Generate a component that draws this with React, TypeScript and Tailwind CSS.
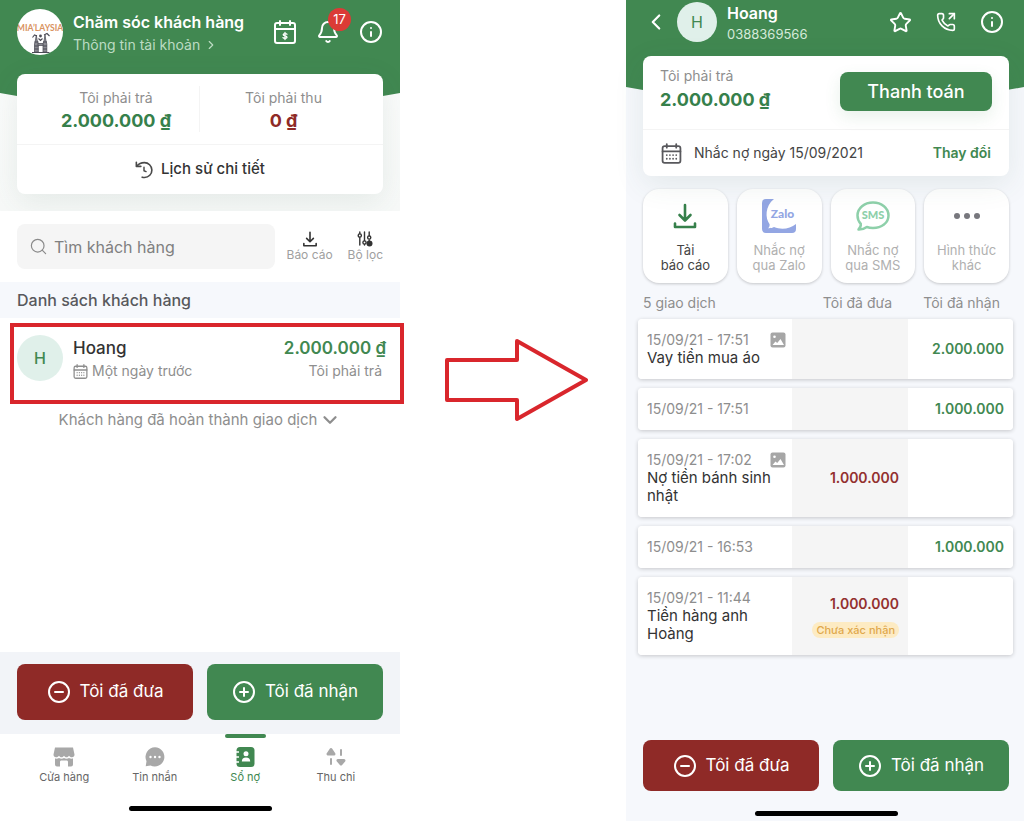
import type { ReactNode } from "react";
import {
  Bell,
  ChevronDown,
  ChevronLeft,
  ChevronRight,
  CircleMinus,
  CirclePlus,
  Info,
  PhoneOutgoing,
  Search,
  Star,
} from "lucide-react";

interface Transaction {
  time: string;
  note?: string;
  photo?: boolean;
  given?: string;
  received?: string;
  pending?: boolean;
}

const transactions: Transaction[] = [
  { time: "15/09/21 - 17:51", note: "Vay tiền mua áo", photo: true, received: "2.000.000" },
  { time: "15/09/21 - 17:51", received: "1.000.000" },
  { time: "15/09/21 - 17:02", note: "Nợ tiền bánh sinh nhật", photo: true, given: "1.000.000" },
  { time: "15/09/21 - 16:53", received: "1.000.000" },
  { time: "15/09/21 - 11:44", note: "Tiền hàng anh Hoàng", given: "1.000.000", pending: true },
];

function ShopLogo() {
  return (
    <svg viewBox="0 0 46 46" className="size-[46px] shrink-0 rounded-full bg-white">
      <text
        x="23"
        y="22"
        textAnchor="middle"
        fontFamily="Lato, sans-serif"
        fontSize="8.600"
        fontWeight="700"
        fill="#d9935f"
      >
        MIA’LAYSIA
      </text>
      {/* twin towers */}
      <g fill="#8b8b92" stroke="#55555e" strokeWidth="0.800">
        <path d="M17.500 43V35l1-4 .8-5 .8 5 1.200 4v8zM26 43V35l1.200-4 .8-5 .8 5 1 4v8z" />
        <path d="M21 34.500h5v2h-5z" />
      </g>
      <g fill="none" stroke="#4b4b55" strokeWidth="1.100">
        <path d="M15 43.500h17.500M17.500 33h4M17.500 37h4M17.500 40h4M26 33h4M26 37h4M26 40h4" />
        <path d="M15.500 28.500l2-2.500 2.500 1M27 26l3-1.500 2.500 2.500M21.500 29.500l2 2 2-2" />
      </g>
      <circle cx="23.500" cy="27" r="1.400" fill="#4b4b55" />
    </svg>
  );
}

function CalendarMoneyIcon() {
  return (
    <svg viewBox="0 0 24 26" className="h-[26px] w-6" fill="none" stroke="currentColor" strokeWidth="2" strokeLinecap="round">
      <rect x="2" y="4" width="20" height="20" rx="2" />
      <path d="M2 10h20M7 2v4M17 2v4" />
      <path d="M14 15.200c-.4-.8-3.800-1-3.800.6 0 1.500 3.800.8 3.800 2.400 0 1.500-3.400 1.400-4 .4M12 13.500v7" strokeWidth="1.300" />
    </svg>
  );
}

function CalendarIcon({ className }: { className: string }) {
  return (
    <svg viewBox="0 0 20 20" className={className} fill="none" stroke="currentColor" strokeLinecap="round">
      <rect x="1.500" y="3" width="17" height="16" rx="2" strokeWidth="1.700" />
      <path d="M1.500 8h17M5.500 1v3.500M14.500 1v3.500" strokeWidth="1.700" />
      <path d="M5.500 11.500h.01M8.500 11.500h.01M11.500 11.500h.01M14.500 11.500h.01M5.500 15h.01M8.500 15h.01M11.500 15h.01M14.500 15h.01" strokeWidth="1.700" />
    </svg>
  );
}

function HistoryIcon() {
  return (
    <svg viewBox="0 0 20 20" className="size-[18px] text-[#4a4a4a]" fill="none" stroke="currentColor" strokeWidth="1.800" strokeLinecap="round" strokeLinejoin="round">
      <path d="M1.500 1.500v4.500h5" />
      <path d="M2 5.700C4 3.200 7 1.800 10.300 1.800a8.300 8.300 0 0 1 .3 16.600c-1 0-1.700-.1-2.600-.4" />
      <path d="M10 7v3.800l2.300 1" strokeWidth="1.600" />
    </svg>
  );
}

function DownloadIcon({ className }: { className: string }) {
  return (
    <svg viewBox="0 0 24 26" className={className} fill="none" stroke="currentColor" strokeWidth="2.600" strokeLinecap="round" strokeLinejoin="round">
      <path d="M12 2v15M6.500 12l5.500 5.500 5.500-5.500M2 20.500V24h20v-3.500" />
    </svg>
  );
}

function FilterIcon() {
  return (
    <svg viewBox="0 0 16 16" className="size-4 text-[#333]" fill="none" stroke="currentColor" strokeWidth="1.400" strokeLinecap="round">
      <path d="M2.800 1v1.500M2.800 6.500V14M7.500 1v8.500M7.500 13.500v.5M12.200 1v4M12.200 9v1" />
      <circle cx="2.800" cy="4.500" r="1.600" />
      <circle cx="7.500" cy="11.500" r="1.600" />
      <circle cx="12.200" cy="6.500" r="1.600" />
      <circle cx="12.500" cy="12.500" r="3" fill="currentColor" stroke="none" />
    </svg>
  );
}

function ZaloIcon() {
  return (
    <svg viewBox="0 0 34 34" className="size-[34px]">
      <path
        d="M12 0H4a4 4 0 0 0-4 4v26a4 4 0 0 0 4 4h26a4 4 0 0 0 4-4v-5c-6 5-15 6-22 3-1.500.8-3.500 1.300-6 1.200 1.300-1 1.800-2.500 1.600-4C3 19 3 7 12 0z"
        fill="#93a6e3"
      />
      <text x="20.500" y="19" textAnchor="middle" fontFamily="Lato, sans-serif" fontSize="12" fontWeight="900" fill="#93a6e3">
        Zalo
      </text>
    </svg>
  );
}

function SmsIcon() {
  return (
    <svg viewBox="0 0 34 30" className="h-[30px] w-[34px]">
      <path
        d="M17 1.500c8.600 0 15.500 5.500 15.500 13S25.600 27 17 27c-2.300 0-4.300-.3-6.200-1-2.200 1.700-5 2.600-8.300 2.500 1.800-1.700 2.500-3.800 2.300-5.700A11.800 11.800 0 0 1 1.500 14.500c0-7.500 6.900-13 15.500-13z"
        fill="none"
        stroke="#8ed0aa"
        strokeWidth="2.500"
        strokeLinejoin="round"
      />
      <text x="17" y="18" textAnchor="middle" fontFamily="Lato, sans-serif" fontSize="11" fontWeight="900" fill="#8ed0aa">
        SMS
      </text>
    </svg>
  );
}

function DotsIcon() {
  return (
    <svg viewBox="0 0 28 8" className="h-2 w-7" fill="#77777d">
      <circle cx="4" cy="4" r="3" />
      <circle cx="14" cy="4" r="3" />
      <circle cx="24" cy="4" r="3" />
    </svg>
  );
}

function PhotoIcon() {
  return (
    <svg viewBox="0 0 16 16" className="size-4 shrink-0">
      <rect x="0.500" y="0.500" width="15" height="15" rx="2" fill="#a6a6a6" />
      <circle cx="4.500" cy="4.800" r="1.300" fill="#fff" />
      <path d="M2.500 13l3-3.500 1.700 1.500L10.500 7l3.500 6z" fill="#fff" />
    </svg>
  );
}

function StoreIcon() {
  return (
    <svg viewBox="0 0 22 20" className="h-5 w-[22px]" fill="currentColor">
      <path d="M2 .5h18l1.500 7c0 1.800-1 2.700-2.500 2.700S16.500 9.500 16 8.700c-.5.900-1.300 1.500-2.500 1.500S11.500 9.600 11 8.700c-.5.900-1.300 1.500-2.500 1.500S6.500 9.600 6 8.700c-.5.800-1.500 1.500-3 1.500S.5 9.300.5 7.500z" />
      <path d="M2 11.500c1.600.3 3 .1 4-.6 1.500 1 3.500 1 5 0 1.500 1 3.500 1 5 0 1 .7 2.400.9 4 .6v6a2 2 0 0 1-2 2h-3v-4.500c0-1-.6-1.500-1.500-1.500h-5C7.600 13.500 7 14 7 15v4.500H4a2 2 0 0 1-2-2z" />
    </svg>
  );
}

function ChatIcon() {
  return (
    <svg viewBox="0 0 20 20" className="size-5" fill="currentColor">
      <path d="M10 .3a9.600 9.600 0 1 1-4.500 18.200L.7 19.300l.8-5A9.700 9.700 0 0 1 10 .3z" />
      <g fill="#fff">
        <circle cx="5.500" cy="10" r="1.200" />
        <circle cx="10" cy="10" r="1.200" />
        <circle cx="14.500" cy="10" r="1.200" />
      </g>
    </svg>
  );
}

function LedgerIcon() {
  return (
    <svg viewBox="0 0 20 20" className="size-5" fill="currentColor">
      <rect x="1.500" y="0" width="18" height="20" rx="3.500" />
      <path d="M0 5h4M0 10h4M0 15h4" stroke="#fff" strokeWidth="1.300" />
      <circle cx="11" cy="6.700" r="2.500" fill="#fff" />
      <path d="M6.800 14.500c0-2.500 1.500-4 4.200-4s4.200 1.500 4.200 4z" fill="#fff" />
    </svg>
  );
}

function CashFlowIcon() {
  return (
    <svg viewBox="0 0 20 20" className="size-5" fill="currentColor" stroke="currentColor" strokeLinejoin="round">
      <path d="M5 2.500L2 7h6z" strokeWidth="3" />
      <path d="M5 12v5M15 3v5" strokeWidth="2" strokeLinecap="round" />
      <path d="M15 17l-3-3.500h6z" strokeWidth="3" />
    </svg>
  );
}

const tabs: { label: string; icon: ReactNode; active?: boolean }[] = [
  { label: "Cửa hàng", icon: <StoreIcon /> },
  { label: "Tin nhắn", icon: <ChatIcon /> },
  { label: "Sổ nợ", icon: <LedgerIcon />, active: true },
  { label: "Thu chi", icon: <CashFlowIcon /> },
];

const actions = [
  { lines: ["Tải", "báo cáo"], icon: <DownloadIcon className="h-[26px] w-6 text-[#36804b]" />, active: true },
  { lines: ["Nhắc nợ", "qua Zalo"], icon: <ZaloIcon /> },
  { lines: ["Nhắc nợ", "qua SMS"], icon: <SmsIcon /> },
  { lines: ["Hình thức", "khác"], icon: <DotsIcon /> },
];

function EntryButtons({ className }: { className: string }) {
  return (
    <div className="grid grid-cols-2 gap-[14px]">
      <button className={`flex items-center justify-center gap-[9px] rounded-lg bg-[#8f2a27] text-[17px] text-white ${className}`}>
        <CircleMinus size={24} />
        Tôi đã đưa
      </button>
      <button className={`flex items-center justify-center gap-[9px] rounded-lg bg-[#418851] text-[17px] text-white ${className}`}>
        <CirclePlus size={24} />
        Tôi đã nhận
      </button>
    </div>
  );
}

function HomeBar() {
  return <div className="mx-auto h-[5px] w-[143px] rounded-full bg-black" />;
}

function CustomerList() {
  return (
    <section className="flex min-h-screen flex-col bg-white">
      <div className="overflow-hidden bg-linear-to-b from-[#fdfdfd] to-[#f7f9f8] pb-[17px]">
        <header className="flex h-28 items-start bg-[#418851] px-[17px] pt-[9px] text-white [clip-path:polygon(0_0,100%_0,100%_93px,50%_128px,0_93px)]">
          <ShopLogo />
          <div className="ml-[10px] flex-1">
            <h1 className="text-base leading-[27px] font-semibold whitespace-nowrap">Chăm sóc khách hàng</h1>
            <a href="#account" className="flex items-center gap-1 text-sm leading-[18px] text-[#bcdcc3]">
              Thông tin tài khoản
              <ChevronRight size={14} />
            </a>
          </div>
          <div className="flex items-center gap-[19px] pt-[10px]">
            <button aria-label="Lịch thu nợ">
              <CalendarMoneyIcon />
            </button>
            <button aria-label="Thông báo" className="relative">
              <Bell size={24} />
              <span className="absolute -top-3 left-3 flex size-[23px] items-center justify-center rounded-full bg-[#db3b36] text-[13px]">
                17
              </span>
            </button>
            <button aria-label="Thông tin">
              <Info size={24} />
            </button>
          </div>
        </header>
        <div className="relative mx-[17px] -mt-[38px] rounded-lg bg-white shadow-[0_8px_30px_rgba(60,100,80,0.10)]">
          <div className="grid grid-cols-2 px-4 py-3 text-center">
            <div className="border-r border-[#f4f4f4]">
              <p className="text-sm leading-6 text-[#8e8e8e]">Tôi phải trả</p>
              <p className="text-lg leading-[22px] font-bold text-[#36804b]">2.000.000 ₫</p>
            </div>
            <div>
              <p className="text-sm leading-6 text-[#8e8e8e]">Tôi phải thu</p>
              <p className="text-lg leading-[22px] font-bold text-[#8f2a27]">0 ₫</p>
            </div>
          </div>
          <button className="flex h-[50px] w-full items-center justify-center gap-2 border-t border-[#f4f4f4] text-[15px] font-medium text-[#333]">
            <HistoryIcon />
            Lịch sử chi tiết
          </button>
        </div>
      </div>

      <div className="flex items-center px-[17px] py-[13px]">
        <label className="flex h-[45px] min-w-0 flex-1 items-center gap-[6px] rounded-lg bg-[#f5f5f5] px-3 text-[#8a8a8a]">
          <Search size={19} strokeWidth={1.5} className="shrink-0" />
          <input
            aria-label="Tìm khách hàng"
            placeholder="Tìm khách hàng"
            className="min-w-0 flex-1 bg-transparent text-base outline-none placeholder:text-[#808080]"
          />
        </label>
        <button className="ml-3 flex flex-col items-center text-xs leading-4 text-[#a0a0a0]">
          <DownloadIcon className="size-4 text-[#333]" />
          Báo cáo
        </button>
        <button className="ml-[15px] flex flex-col items-center text-xs leading-4 text-[#a0a0a0]">
          <FilterIcon />
          Bộ lọc
        </button>
      </div>

      <h2 className="bg-[#f6f8fc] px-[17px] text-base leading-9 font-medium text-[#58585c]">Danh sách khách hàng</h2>

      <button className="relative mt-[5px] -mr-1 ml-[10px] flex h-[81px] items-start border-4 border-[#d9262c] py-2 pr-[14px] pl-[3px] text-left">
        <span className="flex size-[46px] items-center justify-center rounded-full bg-[#e0f0ea] text-base font-medium text-[#418851]">
          H
        </span>
        <span className="ml-[10px] flex-1">
          <span className="block text-[17px] leading-[26px] font-medium text-[#333]">Hoang</span>
          <span className="flex items-center gap-1 text-sm leading-5 text-[#8e8e8e]">
            <CalendarIcon className="size-[15px]" />
            Một ngày trước
          </span>
        </span>
        <span className="text-right">
          <span className="block text-[17px] leading-[26px] font-semibold text-[#418851]">2.000.000 ₫</span>
          <span className="block pr-1 text-sm leading-5 text-[#8e8e8e]">Tôi phải trả</span>
        </span>
      </button>

      <button className="mx-auto mt-1 flex items-center gap-[2px] text-[15px] leading-6 text-[#8e8e8e]">
        Khách hàng đã hoàn thành giao dịch
        <ChevronDown size={22} strokeWidth={2.5} />
      </button>

      <footer className="mt-auto">
        <div className="bg-[#f2f4f8] px-[17px] pt-3 pb-[14px]">
          <EntryButtons className="h-14" />
        </div>
        <nav className="grid grid-cols-4 px-[19px]">
          {tabs.map((tab) => (
            <a
              key={tab.label}
              href="#tab"
              className={`flex flex-col items-center text-[11px] ${tab.active ? "text-[#418851]" : "text-[#a8a8a8]"}`}
            >
              <span className={`h-1 w-[41px] rounded-full ${tab.active ? "bg-[#418851]" : ""}`} />
              <span className="mt-[9px]">{tab.icon}</span>
              <span className={`mt-[2px] leading-4 ${tab.active ? "" : "text-[#666]"}`}>{tab.label}</span>
            </a>
          ))}
        </nav>
        <div className="pt-[21px] pb-[10px]">
          <HomeBar />
        </div>
      </footer>
    </section>
  );
}

function CustomerDetail() {
  return (
    <section className="flex min-h-screen flex-col bg-[#f6f8fc]">
      <header className="flex h-[106px] items-start bg-[#418851] px-[17px] pt-[2px] text-white [clip-path:polygon(0_0,100%_0,100%_87px,50%_122px,0_87px)]">
        <button aria-label="Quay lại" className="flex h-10 items-center">
          <ChevronLeft size={26} />
        </button>
        <span className="ml-2 flex size-10 items-center justify-center rounded-full bg-[#e0f0ea] text-base text-[#418851]">
          H
        </span>
        <div className="ml-[10px] flex-1">
          <h1 className="text-base leading-[22px] font-semibold">Hoang</h1>
          <p className="text-[13px] leading-5 text-[#d5ead9]">0388369566</p>
        </div>
        <div className="flex h-10 items-center gap-6 pr-[3px]">
          <button aria-label="Yêu thích">
            <Star size={23} />
          </button>
          <button aria-label="Gọi điện">
            <PhoneOutgoing size={20} strokeWidth={2} />
          </button>
          <button aria-label="Thông tin">
            <Info size={24} />
          </button>
        </div>
      </header>

      <div className="relative mr-[15px] ml-[17px] -mt-[50px] rounded-lg bg-white shadow-[0_8px_30px_rgba(60,100,80,0.10)]">
        <div className="flex h-[73px] items-start justify-between px-[17px] pt-2">
          <div>
            <p className="text-sm leading-6 text-[#8e8e8e]">Tôi phải trả</p>
            <p className="text-lg leading-6 font-bold text-[#36804b]">2.000.000 ₫</p>
          </div>
          <button className="mt-2 h-[39px] w-[152px] rounded-lg bg-[#418851] text-lg font-medium text-white shadow-[0_6px_16px_rgba(65,136,81,0.12)]">
            Thanh toán
          </button>
        </div>
        <div className="flex h-[47px] items-center border-t border-[#f4f4f4] px-[18px] text-sm">
          <CalendarIcon className="size-[21px] text-[#58585c]" />
          <span className="ml-3 flex-1 text-[#444]">Nhắc nợ ngày 15/09/2021</span>
          <button className="font-semibold text-[#418851]">Thay đổi</button>
        </div>
      </div>

      <div className="mt-[13px] mr-[15px] ml-[17px] grid grid-cols-4 gap-[9px]">
        {actions.map((action) => (
          <button
            key={action.lines.join(" ")}
            className={`flex h-[94px] flex-col items-center rounded-2xl bg-white text-[13px] leading-[15px] shadow-[0_1px_3px_rgba(0,0,0,0.2)] ${
              action.active ? "text-[#444]" : "text-[#b0b0b0]"
            }`}
          >
            <span className="flex h-[54px] items-center justify-center">{action.icon}</span>
            <span>{action.lines[0]}</span>
            <span>{action.lines[1]}</span>
          </button>
        ))}
      </div>

      <div className="mt-[3px] mr-[11px] ml-3">
        <table className="w-full table-fixed border-separate border-spacing-x-0 border-spacing-y-[9px] text-sm">
          <colgroup>
            <col className="w-[41%]" />
            <col className="w-[31%]" />
            <col className="w-[28%]" />
          </colgroup>
          <thead>
            <tr className="leading-[15px] whitespace-nowrap text-[#8e8e8e]">
              <th className="pl-[5px] text-left font-normal">5 giao dịch</th>
              <th className="pr-4 text-right font-normal">Tôi đã đưa</th>
              <th className="pr-[13px] text-right font-normal">Tôi đã nhận</th>
            </tr>
          </thead>
          <tbody>
            {transactions.map((item) => (
              <tr key={item.time + item.received} className="rounded shadow-[0_1px_4px_rgba(0,0,0,0.2)]">
                <td className="rounded-l bg-white py-3 pr-[6px] pl-[9px] leading-[18px]">
                  <div className="flex items-center justify-between text-[#8e8e8e]">
                    {item.time}
                    {item.photo && <PhotoIcon />}
                  </div>
                  {item.note && <p className="pr-2 text-[15px] text-[#333]">{item.note}</p>}
                </td>
                <td className="bg-[#f5f5f5] pr-[9px] text-right font-semibold text-[#93302f]">
                  {item.given}
                  {item.pending && (
                    <span className="mt-2 ml-auto block w-fit rounded-full bg-[#fdebc3] px-1 text-[11px] leading-4 font-medium whitespace-nowrap text-[#e0a84c]">
                      Chưa xác nhận
                    </span>
                  )}
                </td>
                <td className="rounded-r bg-white pr-[9px] text-right font-semibold text-[#418851]">{item.received}</td>
              </tr>
            ))}
          </tbody>
        </table>
      </div>

      <footer className="mt-auto pr-[15px] pb-[5px] pl-[17px]">
        <EntryButtons className="h-[51px]" />
        <div className="mt-5">
          <HomeBar />
        </div>
      </footer>
    </section>
  );
}

export default function App() {
  return (
    <main className="grid min-h-screen grid-cols-[400fr_226fr_398fr] bg-white font-['Inter',sans-serif]">
      <CustomerList />
      <div className="flex items-start justify-center pt-[338px] pl-2">
        <svg viewBox="0 0 144 84" className="h-[84px] w-36" fill="none" stroke="#d9262c" strokeWidth="4" strokeLinejoin="round">
          <path d="M2 22h70V3l69 39-69 39V62H2z" />
        </svg>
      </div>
      <CustomerDetail />
    </main>
  );
}
